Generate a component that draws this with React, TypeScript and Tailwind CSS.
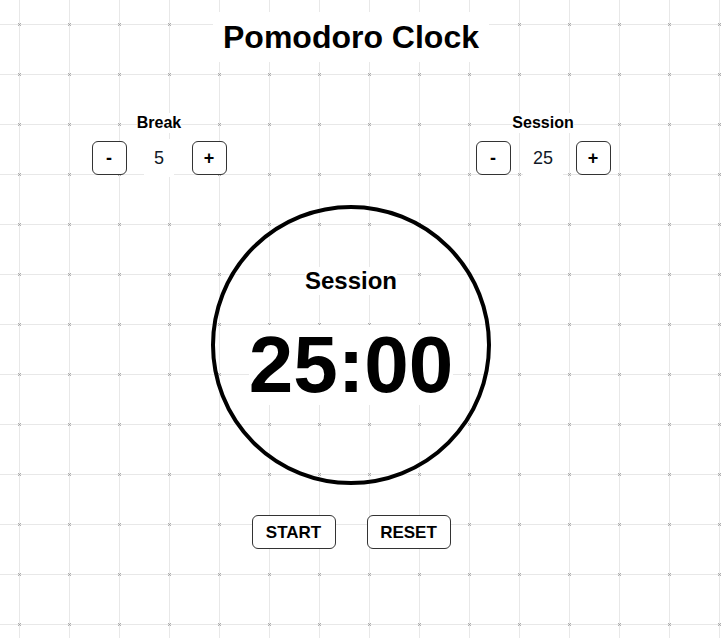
import React from "react";

function Stepper({ label, value }: { label: string; value: number }) {
  return (
    <div className="flex w-[135px] flex-col items-center">
      <div className="bg-white text-[16px] font-bold leading-[20px]">{label}</div>
      <div className="mt-[6px] flex items-center">
        <button className="flex h-[34px] w-[35px] items-center justify-center rounded-[6px] border border-[#333] bg-white text-[18px] font-bold leading-none text-black">
          -
        </button>
        <div className="flex w-[65px] justify-center">
          <span className="bg-white px-[10px] text-[18px] leading-[38px] text-[#111827]">{value}</span>
        </div>
        <button className="flex h-[34px] w-[35px] items-center justify-center rounded-[6px] border border-[#333] bg-white text-[18px] font-bold leading-none text-black">
          +
        </button>
      </div>
    </div>
  );
}

export default function App() {
  return (
    <div className="relative min-h-screen w-full overflow-hidden bg-white font-['Liberation_Sans',Arial,sans-serif] text-black">
      <svg className="absolute inset-0 h-full w-full" aria-hidden="true">
        <defs>
          <pattern id="grid" x="18" y="23" width="50" height="50" patternUnits="userSpaceOnUse">
            <rect x="1" y="0" width="1" height="50" fill="#e8e8e8" />
            <rect x="0" y="1" width="50" height="1" fill="#e8e8e8" />
            <rect x="0" y="0" width="1" height="1" fill="#b0b0b0" />
            <rect x="2" y="0" width="1" height="1" fill="#b0b0b0" />
            <rect x="1" y="1" width="1" height="1" fill="#a0a0a0" />
            <rect x="0" y="2" width="1" height="1" fill="#b0b0b0" />
            <rect x="2" y="2" width="1" height="1" fill="#b0b0b0" />
          </pattern>
        </defs>
        <rect width="100%" height="100%" fill="url(#grid)" />
      </svg>

      <div className="relative flex w-[702px] flex-col items-center pt-[12px]">
        <h1 className="bg-white px-[10px] text-[32px] font-bold leading-[50px]">Pomodoro Clock</h1>

        <div className="mt-[50.5px] flex gap-[249px]">
          <Stepper label="Break" value={5} />
          <Stepper label="Session" value={25} />
        </div>

        <div className="mt-[28.5px] flex h-[280px] w-[280px] flex-col items-center rounded-full border-4 border-black pt-[57.5px]">
          <div className="bg-white text-[24px] font-bold leading-[28px]">Session</div>
          <div className="mt-[30.5px] bg-white text-[80px] font-bold leading-[80px]">25:00</div>
        </div>

        <div className="mt-[30px] flex gap-[31px]">
          <button className="h-[34px] w-[84px] rounded-[6px] border border-[#333] bg-white text-[17px] font-bold leading-none text-black">
            START
          </button>
          <button className="h-[34px] w-[84px] rounded-[6px] border border-[#333] bg-white text-[17px] font-bold leading-none text-black">
            RESET
          </button>
        </div>
      </div>
    </div>
  );
}
